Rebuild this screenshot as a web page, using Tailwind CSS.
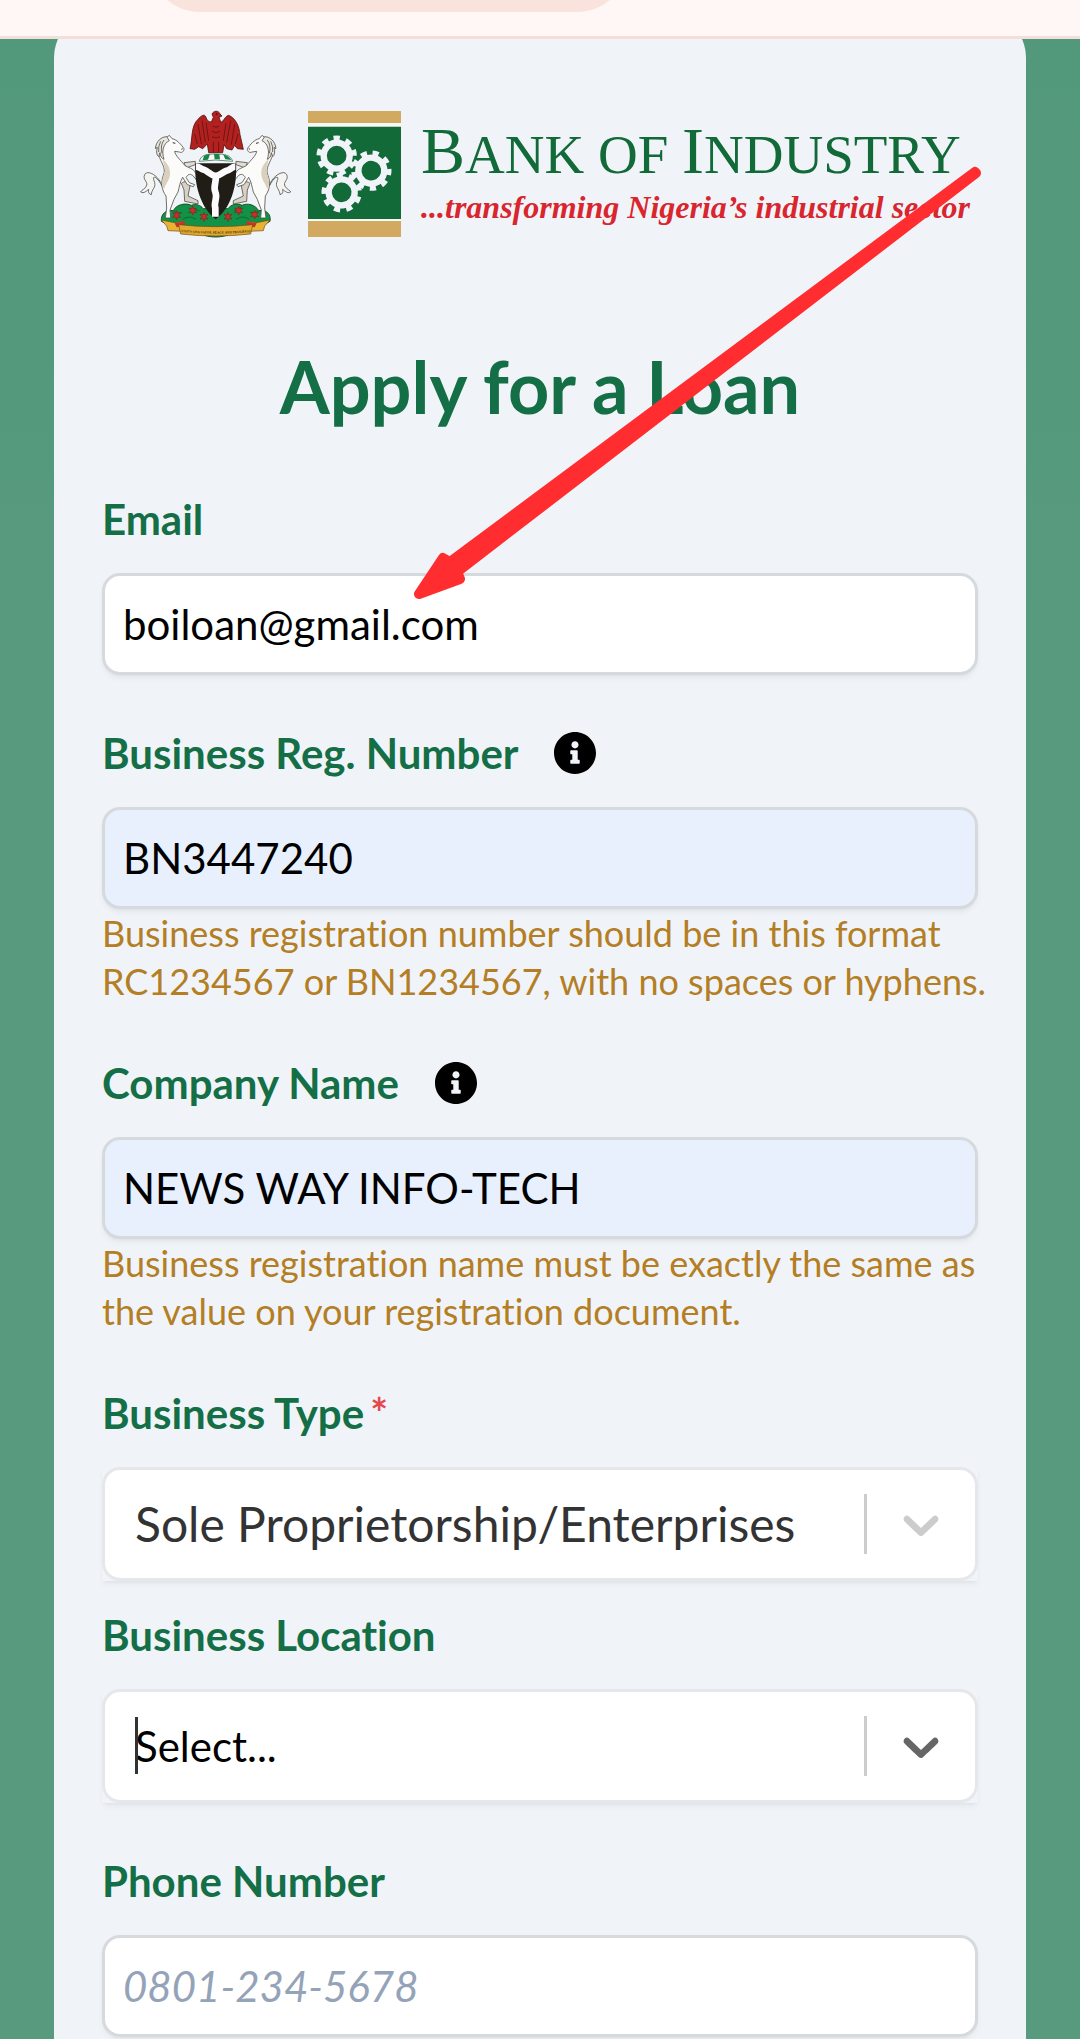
<!DOCTYPE html>
<html lang="en">

<head>
    <meta charset="UTF-8">
    <meta name="viewport" content="width=device-width, initial-scale=1">

    <title>Apply for a Loan</title>

    <!-- TAILWIND -->
    <script src="https://cdn.jsdelivr.net/npm/@tailwindcss/browser@4"></script>
</head>

<body class="relative flex flex-col min-h-screen overflow-x-hidden bg-linear-to-b from-[#52987b] to-[#579a7e] to-30% font-['Lato',sans-serif] [font-variant-ligatures:none] text-black">

    <!-- BROWSER BAR -->
    <header class="relative z-10 flex items-start h-[39px] overflow-hidden bg-[#fff7f5] border-b-3 border-[#f3ded9]">
        <div class="shrink-0 w-[44%] h-24 ml-[14%] -mt-[84px] bg-[#fae3dd] rounded-full"></div>
    </header>

    <main class="grow flex flex-col px-[5%]">

        <div class="grow -mt-[29px] rounded-t-[48px] bg-[#f0f4f9] px-12 pt-[101px] pb-[2px]">

            <!-- LOGO -->
            <div class="flex items-start pl-[34px]">

                <svg class="shrink-0 w-[160px] h-[140px] -mt-[7px] -mb-[7px]" viewBox="0 0 480 420" role="img" aria-label="Coat of arms">
                    <!-- hill -->
                    <path d="M76 352C74 328 92 316 112 320C122 300 150 296 166 304C180 298 194 304 202 314H276C284 302 304 296 318 304C334 296 358 302 368 320C390 316 406 330 402 352L372 368C336 372 312 386 284 390C256 402 220 402 196 390C166 384 140 372 104 366Z" fill="#119247" stroke="#15532f" stroke-width="3" />
                    <path d="M112 320q12 12 26 6M166 304q8 16 24 16M368 320q-12 12-26 6M318 304q-8 16-24 16M140 346q20-14 40 0M300 346q20-14 40 0" fill="none" stroke="#0b6b34" stroke-width="3" />

                    <!-- horses -->
                    <defs>
                        <g id="horse" stroke="#55534c" stroke-width="2.5" stroke-linejoin="round">
                            <path d="M76 240C66 214 34 196 26 212C18 228 40 234 30 248C26 256 16 258 14 264C24 270 32 260 38 256C36 264 38 270 46 272C46 258 60 250 56 236C52 224 50 218 58 220C66 226 72 234 78 246Z" fill="#f4f4f2" />
                            <path d="M136 238C146 230 158 232 162 246L156 276L186 290V300L146 292L144 258Z" fill="#d8d2c4" />
                            <path d="M144 176L178 172V182L150 192Z" fill="#e0dcd2" />
                            <path d="M100 94L108 104C122 106 136 122 144 134C144 142 138 148 130 144L116 142C118 156 134 168 146 184C156 192 172 192 178 206L198 234L190 238L170 214C160 208 156 212 150 220L160 236L176 242L172 248L154 242L140 220C132 232 130 250 126 264L114 286L102 318L104 342H88L92 312L90 276C76 256 74 236 82 214C92 192 74 176 68 152C62 124 72 100 92 100Z" fill="#fbfbfa" />
                            <path d="M80 164C92 178 104 188 102 212C100 230 86 244 84 256C76 240 78 226 84 212C92 194 82 184 80 164Z" fill="#d9d0bd" stroke="none" />
                            <path d="M92 98C76 98 60 112 58 134L64 130C60 144 62 154 68 158L72 146C72 156 78 164 84 166C76 142 82 118 100 110Z" fill="#e9e6df" />
                            <path d="M74 112q-8 14-6 32M84 108q-12 16-6 40" fill="none" />
                            <path d="M110 116l8 2M136 136l4-2" fill="none" stroke="#2d2c29" stroke-width="3" />
                        </g>
                    </defs>
                    <use href="#horse" />
                    <use href="#horse" transform="matrix(-1 0 0 1 478 0)" />

                    <!-- shield -->
                    <path d="M178 178H300C304 244 286 312 239 346C194 312 174 244 178 178Z" fill="#201d17" />
                    <path d="M180 188C192 188 194 196 206 198C216 202 224 214 239 216C254 214 260 204 272 200C284 198 286 188 298 188M238 214C244 232 230 246 238 264C246 282 232 296 238 312V338" fill="none" stroke="#fbfbfd" stroke-width="20" />

                    <!-- eagle -->
                    <path d="M228 30C232 20 248 18 252 30L258 36L249 40L254 54C264 54 266 36 278 34C298 42 310 66 312 92L322 136L304 134L296 124L288 138L272 134L264 122L260 146H218L214 120L200 134L188 128L176 136L162 134C170 106 164 66 186 46C194 36 204 30 208 36C212 44 214 54 226 54L232 40Z" fill="#b2211f" stroke="#561310" stroke-width="2.5" stroke-linejoin="round" />
                    <path d="M186 60L196 120M198 50L208 114M210 56L218 110M296 60L286 122M284 50L272 116M270 58L262 110M176 90L184 120M306 90L298 120M230 66q10 8 20 0M228 82q12 8 24 0M228 98q12 8 24 0M232 114V144M248 114V144" fill="none" stroke="#6d1613" stroke-width="3" />
                    <circle cx="242" cy="30" r="2.5" fill="#2b0a08" />

                    <!-- wreath -->
                    <path d="M190 172C194 152 214 150 239 150C264 150 284 152 290 172Q239 164 190 172Z" fill="#f6f8f6" stroke="#2b5a3e" stroke-width="2" />
                    <path d="M204 156q8-6 18-5l-6 16-16 2zM234 150h16l2 16h-16zM262 152q16 2 24 16l-18-2z" fill="#16854a" />

                    <!-- flowers -->
                    <g fill="#d02b2b" stroke="#7e1614" stroke-width="1.5">
                        <path id="flower" d="M122 320l3 8 9-2-6 7 6 7-9-1-3 8-3-8-9 1 6-7-6-7 9 2z" />
                        <use href="#flower" x="48" y="-14" />
                        <use href="#flower" x="82" y="5" />
                        <use href="#flower" x="154" y="5" />
                        <use href="#flower" x="186" y="-14" />
                        <use href="#flower" x="234" y="-2" />
                    </g>

                    <!-- motto -->
                    <path d="M76 348L116 356L146 352L140 382L96 380L92 366ZM402 348L362 356L332 352L338 382L382 380L386 366Z" fill="#e9b233" stroke="#6b4d13" stroke-width="2" />
                    <path d="M116 358l30-6v14l-24 4zM362 358l-30-6v14l24 4z" fill="#c8322a" />
                    <path d="M128 362Q239 374 350 362L344 390Q239 402 134 390Z" fill="#e2a92e" stroke="#6b4d13" stroke-width="2" />
                    <path id="motto-line" d="M134 384Q239 394 346 384" fill="none" />
                    <text fill="#4a350c" font-size="10" font-weight="700" font-family="Liberation Serif, serif" text-anchor="middle">
                        <textPath href="#motto-line" startOffset="50%">UNITY AND FAITH, PEACE AND PROGRESS</textPath>
                    </text>
                </svg>

                <svg class="shrink-0 w-[93px] h-[126px] ml-3" viewBox="0 0 279 378" role="img" aria-label="Gears">
                    <path d="M0 0H279V36H0ZM0 330H279V378H0Z" fill="#d2a960" />
                    <path d="M0 36H279V47H0ZM0 324H279V330H0Z" fill="#f6faf6" />
                    <path d="M0 47H279V324H0Z" fill="#116a38" />
                    <g fill="none" stroke="#f0f4f9">
                        <g id="gear">
                            <circle cx="86" cy="134" r="39" stroke-width="19" />
                            <circle cx="86" cy="134" r="53" stroke-width="15" pathLength="18" stroke-dasharray="1 1" transform="rotate(-100 86 134)" />
                        </g>
                        <use href="#gear" transform="rotate(14 190 179) translate(104 45)" />
                        <use href="#gear" transform="rotate(-6 101 244) translate(15 110)" />
                    </g>
                </svg>

                <div class="pt-[13px] pl-5 font-['Liberation_Serif',serif] whitespace-nowrap">

                    <p class="text-[66px] leading-[54px] text-[#116a38]">B<span class="text-[55px]">ANK OF </span>I<span class="text-[55px]">NDUSTRY</span></p>

                    <p class="text-[32px] leading-[50px] font-bold italic text-[#d9262e]">...transforming Nigeria’s industrial sector</p>
                </div>
            </div>

            <h1 class="mt-[104px] text-[72px] leading-[90px] font-bold text-center text-[#146f47]">Apply for a Loan</h1>

            <form class="mt-[58px]">

                <!-- EMAIL -->
                <div>
                    <label for="email" class="block text-[42px] leading-[60px] font-bold text-[#146f47]">Email</label>

                    <input id="email" type="email" value="boiloan@gmail.com"
                        class="block w-full h-[102px] mt-6 px-[18px] bg-white border-3 border-[#d6dadd] rounded-[18px] shadow-md shadow-black/5 text-[42px] outline-none">
                </div>

                <!-- REGISTRATION NUMBER -->
                <div class="mt-12">
                    <div class="flex items-center gap-9">
                        <label for="reg" class="text-[42px] leading-[60px] font-bold text-[#146f47]">Business Reg. Number</label>

                        <button type="button" aria-label="About the registration number">
                            <svg class="block size-[42px]" viewBox="8 8 496 496">
                                <path d="M256 8C119.043 8 8 119.083 8 256c0 136.997 111.043 248 248 248s248-111.003 248-248C504 119.083 392.957 8 256 8zm0 110c23.196 0 42 18.804 42 42s-18.804 42-42 42-42-18.804-42-42 18.804-42 42-42zm56 254c0 6.627-5.373 12-12 12h-88c-6.627 0-12-5.373-12-12v-24c0-6.627 5.373-12 12-12h12v-64h-12c-6.627 0-12-5.373-12-12v-24c0-6.627 5.373-12 12-12h64c6.627 0 12 5.373 12 12v100h12c6.627 0 12 5.373 12 12v24z" />
                            </svg>
                        </button>
                    </div>

                    <input id="reg" type="text" value="BN3447240"
                        class="block w-full h-[102px] mt-6 px-[18px] bg-[#e8f0fe] border-3 border-[#d6dadd] rounded-[18px] shadow-md shadow-black/5 text-[42px] outline-none">

                    <p class="-mr-3 text-[36px] leading-[48px] text-[#b47e24]">Business registration number should be in this format RC1234567 or BN1234567, with no spaces or hyphens.</p>
                </div>

                <!-- COMPANY NAME -->
                <div class="mt-12">
                    <div class="flex items-center gap-9">
                        <label for="company" class="text-[42px] leading-[60px] font-bold text-[#146f47]">Company Name</label>

                        <button type="button" aria-label="About the company name">
                            <svg class="block size-[42px]" viewBox="8 8 496 496">
                                <path d="M256 8C119.043 8 8 119.083 8 256c0 136.997 111.043 248 248 248s248-111.003 248-248C504 119.083 392.957 8 256 8zm0 110c23.196 0 42 18.804 42 42s-18.804 42-42 42-42-18.804-42-42 18.804-42 42-42zm56 254c0 6.627-5.373 12-12 12h-88c-6.627 0-12-5.373-12-12v-24c0-6.627 5.373-12 12-12h12v-64h-12c-6.627 0-12-5.373-12-12v-24c0-6.627 5.373-12 12-12h64c6.627 0 12 5.373 12 12v100h12c6.627 0 12 5.373 12 12v24z" />
                            </svg>
                        </button>
                    </div>

                    <input id="company" type="text" value="NEWS WAY INFO-TECH"
                        class="block w-full h-[102px] mt-6 px-[18px] bg-[#e8f0fe] border-3 border-[#d6dadd] rounded-[18px] shadow-md shadow-black/5 text-[42px] outline-none">

                    <p class="-mr-3 text-[36px] leading-[48px] text-[#b47e24]">Business registration name must be exactly the same as the value on your registration document.</p>
                </div>

                <!-- BUSINESS TYPE -->
                <div class="mt-12">
                    <label for="type" class="block text-[42px] leading-[60px] font-bold text-[#146f47]">Business Type<span class="ml-1.5 text-[#e5484d]">*</span></label>

                    <div class="relative mt-6 shadow-md shadow-black/5">
                        <select id="type" class="block appearance-none w-full h-[114px] pl-[30px] pr-[120px] bg-white border-3 border-[#e5e7eb] rounded-[18px] text-[48px] text-[#333333] outline-none">
                            <option>Sole Proprietorship/Enterprises</option>
                        </select>

                        <div class="absolute inset-y-0 right-[27px] flex items-center gap-6 pointer-events-none">
                            <span class="w-[3px] h-[60px] bg-[#cccccc]"></span>
                            <svg class="size-[60px] fill-[#cccccc]" viewBox="0 0 20 20">
                                <path d="M4.516 7.548c0.436-0.446 1.043-0.481 1.576 0l3.908 3.747 3.908-3.747c0.533-0.481 1.141-0.446 1.574 0 0.436 0.445 0.408 1.197 0 1.615-0.406 0.418-4.695 4.502-4.695 4.502-0.217 0.223-0.502 0.335-0.787 0.335s-0.57-0.112-0.789-0.335c0 0-4.287-4.084-4.695-4.502s-0.436-1.17 0-1.615z" />
                            </svg>
                        </div>
                    </div>
                </div>

                <!-- BUSINESS LOCATION -->
                <div class="mt-6">
                    <label for="location" class="block text-[42px] leading-[60px] font-bold text-[#146f47]">Business Location</label>

                    <div class="relative mt-6 shadow-md shadow-black/5">
                        <select id="location" class="block appearance-none w-full h-[114px] pl-[30px] pr-[120px] bg-white border-3 border-[#e5e7eb] rounded-[18px] text-[42px] outline-none">
                            <option>Select...</option>
                        </select>

                        <!-- text cursor -->
                        <span class="absolute left-[33px] top-7 w-[3px] h-[57px] bg-[#333333] pointer-events-none"></span>

                        <div class="absolute inset-y-0 right-[27px] flex items-center gap-6 pointer-events-none">
                            <span class="w-[3px] h-[60px] bg-[#cccccc]"></span>
                            <svg class="size-[60px] fill-[#666666]" viewBox="0 0 20 20">
                                <path d="M4.516 7.548c0.436-0.446 1.043-0.481 1.576 0l3.908 3.747 3.908-3.747c0.533-0.481 1.141-0.446 1.574 0 0.436 0.445 0.408 1.197 0 1.615-0.406 0.418-4.695 4.502-4.695 4.502-0.217 0.223-0.502 0.335-0.787 0.335s-0.57-0.112-0.789-0.335c0 0-4.287-4.084-4.695-4.502s-0.436-1.17 0-1.615z" />
                            </svg>
                        </div>
                    </div>
                </div>

                <!-- PHONE -->
                <div class="mt-12">
                    <label for="phone" class="block text-[42px] leading-[60px] font-bold text-[#146f47]">Phone Number</label>

                    <input id="phone" type="tel" placeholder="0801-234-5678"
                        class="block w-full h-[102px] mt-6 px-[18px] bg-white border-3 border-[#d6dadd] rounded-[18px] shadow-md shadow-black/5 text-[42px] outline-none placeholder:italic placeholder:text-[#94a3b8]">
                </div>
            </form>
        </div>
    </main>

    <!-- ARROW POINTING AT THE EMAIL -->
    <svg class="absolute left-[400px] top-[160px] z-20 w-[600px] h-[450px] pointer-events-none" viewBox="400 160 600 450" aria-hidden="true">
        <path d="M975 172L976 173L457 572L460 579L419 594L443 558L450 562Z" fill="#ff2d30" stroke="#ff2d30" stroke-width="10" stroke-linejoin="round" />
    </svg>
</body>

</html>
